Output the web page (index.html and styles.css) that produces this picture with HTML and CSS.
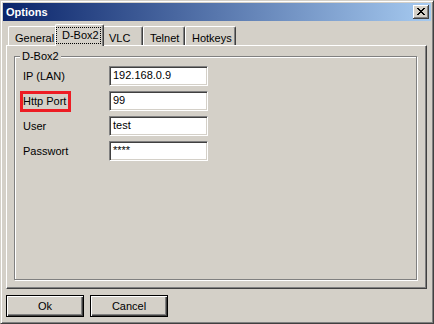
FILE: index.html
```html
<!DOCTYPE html>
<html lang="en">
<head>
    <meta charset="UTF-8">
    <title>Options</title>
    <link rel="stylesheet" href="styles.css">
</head>
<body>
    <div class="window">
        <div class="titlebar">
            <span class="title">Options</span>
            <div class="close-btn">
                <svg width="8" height="7" viewBox="0 0 8 7" shape-rendering="crispEdges">
                    <path fill="#000" d="M0 0h2v1h-2z M6 0h2v1h-2z M1 1h2v1h-2z M5 1h2v1h-2z M2 2h4v1h-4z M3 3h2v1h-2z M2 4h4v1h-4z M1 5h2v1h-2z M5 5h2v1h-2z M0 6h2v1h-2z M6 6h2v1h-2z"/>
                </svg>
            </div>
        </div>

        <div class="dialog-body">
            <div class="tabs">
                <div class="tab tab-general">General</div>
                <div class="tab tab-dbox tab-active"><span class="focus">D-Box2</span></div>
                <div class="tab tab-vlc">VLC</div>
                <div class="tab tab-telnet">Telnet</div>
                <div class="tab tab-hotkeys">Hotkeys</div>
            </div>

            <div class="panel">
                <div class="group">
                    <span class="group-label">D-Box2</span>
                    <div class="field-row">
                        <span class="field-label">IP (LAN)</span>
                        <div class="field-input">192.168.0.9</div>
                    </div>
                    <div class="field-row">
                        <span class="field-label"><span class="marked">Http Port</span></span>
                        <div class="field-input">99</div>
                    </div>
                    <div class="field-row">
                        <span class="field-label">User</span>
                        <div class="field-input">test</div>
                    </div>
                    <div class="field-row">
                        <span class="field-label">Passwort</span>
                        <div class="field-input">****</div>
                    </div>
                </div>
            </div>

            <div class="button-row">
                <div class="btn">Ok</div>
                <div class="btn">Cancel</div>
            </div>
        </div>
    </div>
</body>
</html>
```

FILE: styles.css
```css
* {
    box-sizing: border-box;
}

body {
    margin: 0;
    background-color: #d4d0c8;
    font-family: "Liberation Sans", Arial, sans-serif;
    font-size: 11px;
    color: #000;
}

.window {
    width: 434px;
    height: 324px;
    padding: 1px;
    background-color: #d4d0c8;
    border-top: 1px solid #d4d0c8;
    border-left: 1px solid #d4d0c8;
    border-right: 1px solid #404040;
    border-bottom: 1px solid #404040;
    box-shadow: inset 1px 1px 0 #fff, inset -1px -1px 0 #808080;
    display: flex;
    flex-direction: column;
}

.titlebar {
    height: 18px;
    margin: 1px 1px 0 1px;
    background: linear-gradient(to right, #0a246a, #a6caf0);
    display: flex;
    align-items: flex-start;
    justify-content: space-between;
}

.title {
    color: #fff;
    font-weight: bold;
    line-height: 18px;
    padding-left: 3px;
}

.close-btn {
    width: 16px;
    height: 14px;
    margin: 2px 2px 0 0;
    background-color: #d4d0c8;
    box-shadow: inset -1px -1px 0 #404040, inset 1px 1px 0 #fff, inset -2px -2px 0 #808080;
    display: flex;
    align-items: center;
    justify-content: center;
    padding: 0 0 1px 0;
}

.close-btn svg {
    display: block;
    margin-left: -1px;
}

.dialog-body {
    padding: 0 4px 0 3px;
    margin: 0 1px;
}

.tabs {
    height: 21px;
    margin-top: 3px;
    padding-left: 2px;
    display: flex;
    align-items: flex-end;
    position: relative;
    z-index: 1;
}

.tab {
    height: 19px;
    padding: 5px 0 0 6px;
    line-height: 12px;
    background-color: #d4d0c8;
    border-top: 1px solid #fff;
    border-left: 1px solid #fff;
    border-right: 1px solid #404040;
    border-radius: 2px 2px 0 0;
    box-shadow: inset -1px 0 0 #808080;
    white-space: nowrap;
}

.tab-general { width: 49px; }
.tab-dbox { width: 45px; }
.tab-vlc { width: 41px; }
.tab-telnet { width: 42px; }
.tab-hotkeys { width: 51px; }

.tab-active {
    width: 49px;
    height: 22px;
    margin: 0 -2px -1px -2px;
    padding: 2px 2px 0 0;
    position: relative;
    z-index: 2;
}

.tab-general + .tab-active {
    margin-left: -2px;
}

.focus {
    display: block;
    height: 17px;
    padding: 1px 0 0 5px;
    line-height: 13px;
    border: 1px dotted #000;
}

.panel {
    height: 244px;
    padding: 10px 9px 8px 7px;
    border-top: 1px solid #fff;
    border-left: 1px solid #fff;
    border-right: 1px solid #404040;
    border-bottom: 1px solid #404040;
    box-shadow: inset -1px -1px 0 #808080;
    display: flex;
}

.group {
    flex: 1;
    position: relative;
    padding: 9px 0 0 8px;
    border: 1px solid #808080;
    box-shadow: 1px 1px 0 #fff, inset 1px 1px 0 #fff;
    display: flex;
    flex-direction: column;
    gap: 5px;
}

.group-label {
    position: absolute;
    top: -7px;
    left: 5px;
    padding: 0 2px;
    line-height: 13px;
    background-color: #d4d0c8;
}

.field-row {
    display: flex;
    align-items: center;
    height: 20px;
}

.field-label {
    width: 86px;
    line-height: 20px;
    white-space: nowrap;
}

.marked {
    display: inline-block;
    height: 21px;
    margin: 0 0 -1px -3px;
    padding: 0 2px 0 0;
    line-height: 15px;
    border: 3px solid #ed1c24;
}

.field-input {
    width: 99px;
    height: 20px;
    padding: 0 1px;
    line-height: 16px;
    background-color: #fff;
    border-top: 1px solid #808080;
    border-left: 1px solid #808080;
    border-right: 1px solid #fff;
    border-bottom: 1px solid #fff;
    box-shadow: inset 1px 1px 0 #404040, inset -1px -1px 0 #d4d0c8;
    padding-left: 3px;
}

.button-row {
    display: flex;
    gap: 6px;
    margin-top: 6px;
}

.btn {
    width: 78px;
    height: 22px;
    line-height: 20px;
    text-align: center;
    background-color: #d4d0c8;
    border: 1px solid #000;
    box-shadow: inset 1px 1px 0 #fff, inset -1px -1px 0 #404040, inset -2px -2px 0 #808080;
}
```
